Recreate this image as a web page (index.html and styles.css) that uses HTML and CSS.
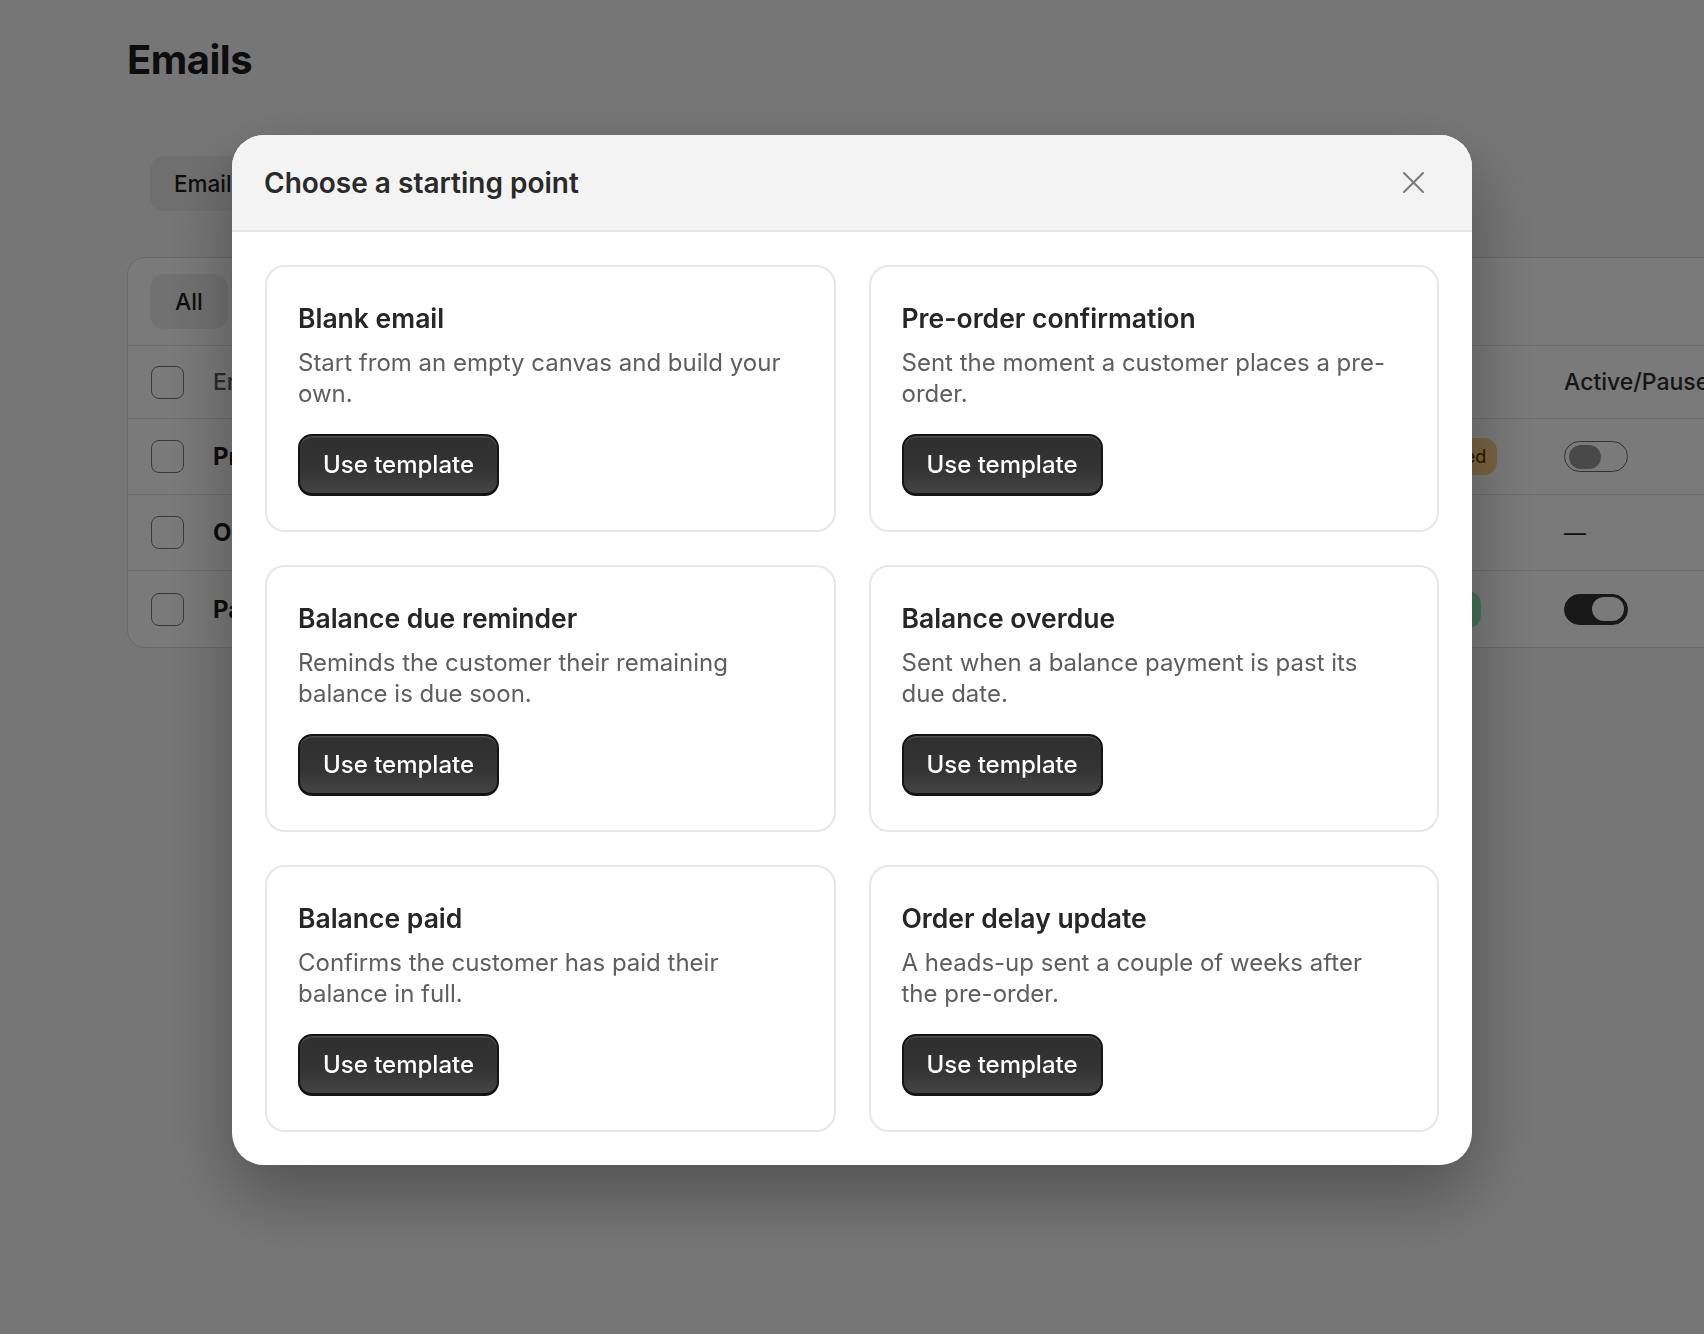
FILE: index.html
```html
<!DOCTYPE html>
<html lang="en">
<head>
  <meta charset="UTF-8" />
  <meta name="viewport" content="width=device-width, initial-scale=1.0"/>
  <title>Emails</title>
  <link rel="stylesheet" href="styles.css">
</head>
<body>

  <main class="page">
    <h1 class="page-title">Emails</h1>

    <div class="tabs">
      <span class="tab active">Emails</span>
      <span class="tab">Settings</span>
    </div>

    <section class="table-card">
      <div class="filters">
        <span class="chip">All</span>
        <span class="chip plain">Active</span>
      </div>

      <div class="row head">
        <span class="check"></span>
        <span class="col-name">Email</span>
        <span class="col-status"></span>
        <span class="col-active">Active/Paused</span>
      </div>
      <div class="row">
        <span class="check"></span>
        <span class="col-name strong">Pre-order confirmation</span>
        <span class="col-status"><span class="badge paused">Paused</span></span>
        <span class="col-active"><span class="toggle"></span></span>
      </div>
      <div class="row">
        <span class="check"></span>
        <span class="col-name strong">Order delay update</span>
        <span class="col-status"></span>
        <span class="col-active"><span class="dash">—</span></span>
      </div>
      <div class="row">
        <span class="check"></span>
        <span class="col-name strong">Payment reminder</span>
        <span class="col-status"><span class="badge live">Live</span></span>
        <span class="col-active"><span class="toggle on"></span></span>
      </div>
    </section>
  </main>

  <div class="backdrop">
    <div class="modal" role="dialog" aria-labelledby="modalTitle">
      <header class="modal-head">
        <h2 id="modalTitle">Choose a starting point</h2>
        <button class="close" aria-label="Close">
          <svg width="23" height="23" viewBox="0 0 23 23" fill="none" stroke="currentColor" stroke-width="2" stroke-linecap="round">
            <path d="M2 2 L21 21 M21 2 L2 21"/>
          </svg>
        </button>
      </header>

      <div class="modal-body">
        <article class="tpl">
          <h3>Blank email</h3>
          <p>Start from an empty canvas and build your own.</p>
          <button class="use-btn">Use template</button>
        </article>
        <article class="tpl">
          <h3>Pre-order confirmation</h3>
          <p>Sent the moment a customer places a pre-order.</p>
          <button class="use-btn">Use template</button>
        </article>
        <article class="tpl">
          <h3>Balance due reminder</h3>
          <p>Reminds the customer their remaining balance is due soon.</p>
          <button class="use-btn">Use template</button>
        </article>
        <article class="tpl">
          <h3>Balance overdue</h3>
          <p>Sent when a balance payment is past its due date.</p>
          <button class="use-btn">Use template</button>
        </article>
        <article class="tpl">
          <h3>Balance paid</h3>
          <p>Confirms the customer has paid their balance in full.</p>
          <button class="use-btn">Use template</button>
        </article>
        <article class="tpl">
          <h3>Order delay update</h3>
          <p>A heads-up sent a couple of weeks after the pre-order.</p>
          <button class="use-btn">Use template</button>
        </article>
      </div>
    </div>
  </div>

</body>
</html>
```

FILE: styles.css
```css
* {
  box-sizing: border-box;
}

body {
  margin: 0;
  font-family: 'Inter', 'Noto Sans', sans-serif;
  background: #f6f6f6;
  color: #1c1c1c;
  overflow: hidden;
  height: 100vh;
}

/* page behind the dialog */

.page {
  padding: 32px 0 0 127px;
}

.page-title {
  margin: 0 0 68px;
  font-size: 40px;
  font-weight: 700;
  letter-spacing: -0.5px;
  line-height: 56px;
}

.tabs {
  display: flex;
  gap: 8px;
  margin: 0 0 46px 23px;
}

.tab {
  height: 55px;
  padding: 0 24px;
  display: flex;
  align-items: center;
  border-radius: 14px;
  font-size: 22.5px;
  font-weight: 500;
  color: #333;
}

.tab.active {
  background: #e9e9e9;
  color: #1c1c1c;
}

.table-card {
  width: 1680px;
  background: #fff;
  border: 1.5px solid #dcdcdc;
  border-radius: 18px;
  overflow: hidden;
}

.filters {
  display: flex;
  gap: 10px;
  padding: 16px 22px;
  border-bottom: 1.5px solid #e2e2e2;
}

.chip {
  height: 55px;
  padding: 0 25px;
  display: flex;
  align-items: center;
  border-radius: 14px;
  background: #ececec;
  font-size: 23px;
  font-weight: 500;
}

.chip.plain {
  background: none;
  color: #555;
}

.row {
  display: grid;
  grid-template-columns: 62px 1199px 152px 1fr;
  align-items: center;
  height: 76px;
  padding-left: 23px;
  border-bottom: 1.5px solid #e2e2e2;
  font-size: 23px;
}

.row:last-child {
  border-bottom: none;
}

.row.head {
  height: 73px;
  color: #5a5a5a;
  font-weight: 500;
}

.row.head .col-active {
  color: #2e2e2e;
}

.check {
  width: 33px;
  height: 33px;
  border: 1.5px solid #777;
  border-radius: 8px;
  background: #fff;
}

.strong {
  font-weight: 700;
  font-size: 24px;
}

.badge {
  display: inline-block;
  padding: 8px 11px;
  border-radius: 13px;
  font-size: 18px;
}

.badge.paused {
  background: #ffcf8a;
  color: #4a2e00;
}

.badge.live {
  padding: 8px 17px;
  background: #8ff0b9;
  color: #0b4d2a;
}

.toggle {
  display: block;
  width: 64px;
  height: 31px;
  border: 1.5px solid #6a6a6a;
  border-radius: 16px;
  position: relative;
}

.toggle::after {
  content: "";
  position: absolute;
  top: 2.5px;
  left: 3.5px;
  width: 32px;
  height: 24px;
  border-radius: 12px;
  background: #9a9a9a;
}

.toggle.on {
  background: #333;
  border-color: #333;
}

.toggle.on::after {
  left: auto;
  right: 3px;
  background: #fff;
}

.dash {
  font-size: 22px;
  color: #222;
}

/* dialog */

.backdrop {
  position: fixed;
  inset: 0;
  background: rgba(0, 0, 0, 0.52);
  display: flex;
  justify-content: center;
  align-items: flex-start;
  padding-top: 135px;
}

.modal {
  width: 1240px;
  background: #fff;
  border-radius: 32px;
  overflow: hidden;
  box-shadow: 0 30px 70px rgba(0, 0, 0, 0.32);
}

.modal-head {
  height: 97px;
  display: flex;
  align-items: center;
  justify-content: space-between;
  padding: 0 37px 0 32px;
  background: #f3f3f3;
  border-bottom: 2px solid #e4e4e4;
}

.modal-head h2 {
  margin: 0;
  font-size: 28px;
  font-weight: 600;
  color: #2a2a2a;
}

.close {
  width: 44px;
  height: 44px;
  display: flex;
  align-items: center;
  justify-content: center;
  padding: 0;
  border: none;
  background: none;
  color: #7a7a7a;
  cursor: pointer;
}

.modal-body {
  display: grid;
  grid-template-columns: 1fr 1fr;
  gap: 33px;
  padding: 33px 33px 33px;
}

.tpl {
  border: 2px solid #e7e7e7;
  border-radius: 20px;
  padding: 33px 31px 31px;
  height: 267px;
}

.tpl h3 {
  margin: 0 0 10px;
  font-size: 26.5px;
  line-height: 37px;
  font-weight: 600;
  color: #262626;
}

.tpl p {
  margin: 0 0 25px;
  max-width: 500px;
  font-size: 24px;
  line-height: 31px;
  color: #5e5e5e;
}

.use-btn {
  height: 62px;
  padding: 0 23px;
  font-family: inherit;
  font-size: 24px;
  font-weight: 500;
  color: #fff;
  background: linear-gradient(#2f2f2f, #343434 60%, #454545);
  border: 2px solid #141414;
  border-bottom-width: 3px;
  border-radius: 14px;
  box-shadow: inset 0 1.5px 0 rgba(255, 255, 255, 0.16);
  cursor: pointer;
}

.use-btn:hover {
  background: #222;
}
```
